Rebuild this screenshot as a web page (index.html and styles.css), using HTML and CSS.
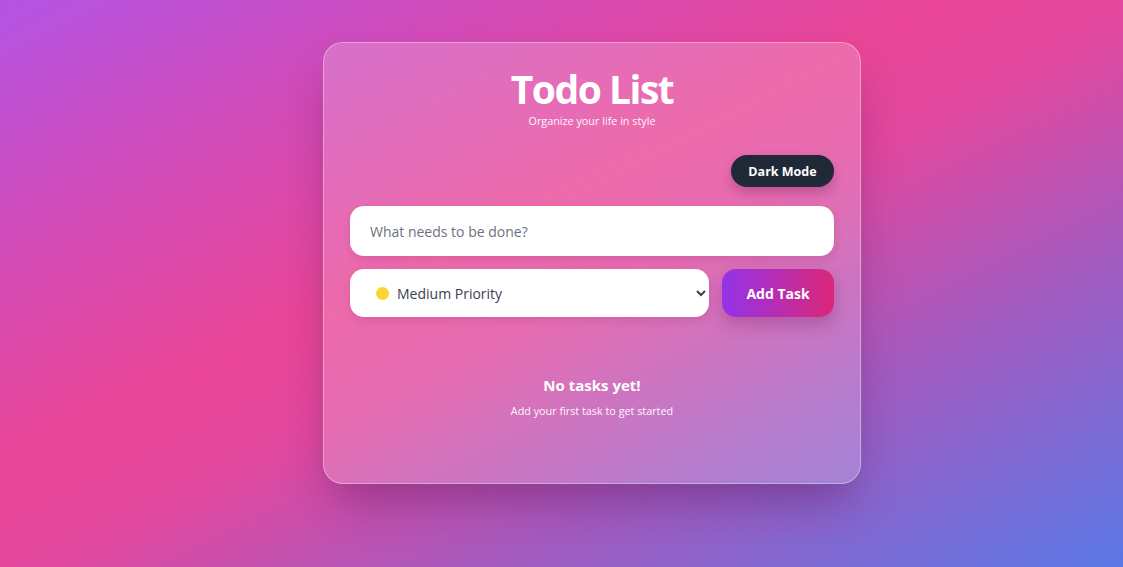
FILE: index.html
```html
<!DOCTYPE html>
<html lang="en">
<head>
<meta charset="utf-8">
<title>Todo List</title>
<link rel="stylesheet" href="styles.css">
</head>
<body>
<main class="card">
  <header class="head">
    <h1 class="title">Todo List</h1>
    <p class="subtitle">Organize your life in style</p>
  </header>
  <div class="toolbar">
    <button class="mode-btn" type="button">Dark Mode</button>
  </div>
  <form class="form">
    <input class="task-input" type="text" placeholder="What needs to be done?">
    <div class="row">
      <div class="select-wrap">
        <span class="dot"></span>
        <select class="priority">
          <option>Medium Priority</option>
          <option>High Priority</option>
          <option>Low Priority</option>
        </select>
      </div>
      <button class="add-btn" type="button">Add Task</button>
    </div>
  </form>
  <section class="empty">
    <h2 class="empty-title">No tasks yet!</h2>
    <p class="empty-text">Add your first task to get started</p>
  </section>
</main>
</body>
</html>
```

FILE: styles.css
```css
* { box-sizing: border-box; }
html, body { height: 100%; }
body {
  margin: 0;
  font-family: "Open Sans", "Noto Sans", sans-serif;
  background: linear-gradient(to bottom right, #b454e4 0%, #d24bb8 22%, #ea4697 42%, #e2489f 52%, #a45bc0 72%, #5a78e6 100%);
  display: flex;
  justify-content: center;
  align-items: flex-start;
  padding: 42px 0 0 61px;
}
.card {
  width: 538px;
  height: 442px;
  border-radius: 20px;
  border: 1px solid rgba(255,255,255,0.35);
  background: rgba(255,255,255,0.2);
  box-shadow: 0 25px 45px -10px rgba(80, 20, 90, 0.45);
  padding: 26px 26px 0 26px;
  display: flex;
  flex-direction: column;
}
.head { text-align: center; color: #fff; }
.title {
  margin: 0;
  font-size: 39px;
  font-weight: 700;
  line-height: 40px;
  letter-spacing: -1.5px;
}
.subtitle {
  margin: 5px 0 0;
  font-size: 10.8px;
  line-height: 14px;
  opacity: 0.95;
}
.toolbar {
  display: flex;
  justify-content: flex-end;
  margin-top: 27px;
}
.mode-btn {
  height: 32px;
  width: 103px;
  border: none;
  border-radius: 16px;
  background: #1f2937;
  color: #fff;
  font-family: inherit;
  font-weight: 700;
  font-size: 12.5px;
  box-shadow: 0 6px 12px rgba(60, 10, 60, 0.25);
}
.form {
  margin-top: 19px;
  display: flex;
  flex-direction: column;
  gap: 13px;
}
.task-input {
  height: 50px;
  border: none;
  border-radius: 14px;
  background: #fff;
  padding: 0 20px;
  font-family: inherit;
  font-size: 14px;
  color: #374151;
  box-shadow: 0 4px 10px rgba(120, 30, 90, 0.15);
  outline: none;
}
.task-input::placeholder { color: #6b7280; font-weight: 500; }
.row {
  display: flex;
  gap: 13px;
}
.select-wrap {
  position: relative;
  flex: 1;
}
.dot {
  position: absolute;
  left: 26px;
  top: 18px;
  width: 13px;
  height: 13px;
  border-radius: 50%;
  background: #fcd535;
  pointer-events: none;
}
.priority {
  width: 100%;
  height: 48px;
  border: none;
  border-radius: 14px;
  background: #fff;
  padding: 0 8px 0 43px;
  font-family: inherit;
  font-size: 14px;
  font-weight: 500;
  color: #374151;
  box-shadow: 0 4px 10px rgba(120, 30, 90, 0.15);
  outline: none;
}
.add-btn {
  width: 112px;
  height: 48px;
  border: none;
  border-radius: 14px;
  background: linear-gradient(to right, #9333ea, #db2777);
  color: #fff;
  font-family: inherit;
  font-weight: 700;
  font-size: 14px;
  box-shadow: 0 8px 16px rgba(120, 30, 100, 0.3);
}
.empty {
  text-align: center;
  color: #fff;
  margin-top: 58px;
}
.empty-title {
  margin: 0;
  font-size: 15px;
  font-weight: 700;
  line-height: 20px;
}
.empty-text {
  margin: 9px 0 0;
  font-size: 10.8px;
  line-height: 14px;
  opacity: 0.95;
}
```
